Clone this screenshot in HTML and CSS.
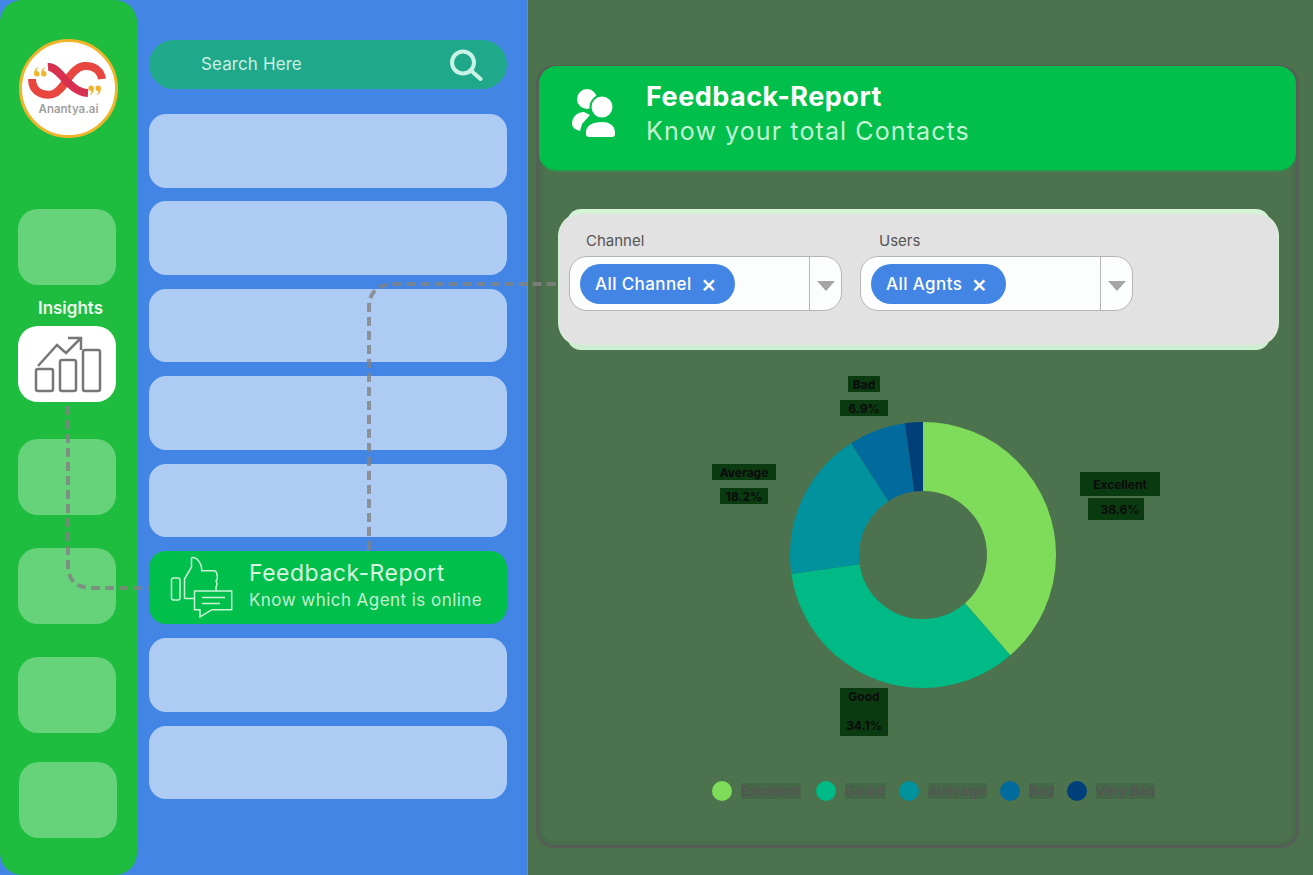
FILE: index.html
```html
<!DOCTYPE html>
<html lang="en">
<head>
    <meta charset="UTF-8">
    <meta name="viewport" content="width=device-width, initial-scale=1.0">
    <title>Feedback Report</title>
    <link rel="stylesheet" href="styles.css">
</head>
<body>
    <div class="app">
        <nav class="rail">
            <div class="logo">
                <svg viewBox="0 0 93 93" width="93" height="93">
                    <path class="logo-loop-a" d="M10 37 C10 52 24 54 31 52 C42 49 48 26 62 24 C72 23 79 29 80 37"/>
                    <path class="logo-loop-b" d="M26 25 C38 24 46 50 66 51"/>
                    <g class="logo-quote">
                        <path d="M12 32 Q12 26 17 25 Q14 27 14.5 29 A2.8 2.8 0 1 1 12 32Z"/>
                        <path d="M19 32 Q19 26 24 25 Q21 27 21.5 29 A2.8 2.8 0 1 1 19 32Z"/>
                        <path d="M79 46 Q79 52 74 53 Q77 51 76.5 49 A2.8 2.8 0 1 1 79 46Z"/>
                        <path d="M72 46 Q72 52 67 53 Q70 51 69.5 49 A2.8 2.8 0 1 1 72 46Z"/>
                    </g>
                    <text class="logo-name" x="46.5" y="71">Anantya.ai</text>
                </svg>
            </div>
            <div class="tile tile-first"></div>
            <div class="tile-label">Insights</div>
            <div class="tile tile-active">
                <svg viewBox="0 0 98 76" width="98" height="76">
                    <rect x="18" y="43" width="17" height="22" rx="2"/>
                    <rect x="42" y="34" width="16" height="31" rx="2"/>
                    <rect x="65" y="24" width="17" height="41" rx="2"/>
                    <path d="M20 40 L39 19 L48 27 L63 12 M50 12 H63 V24"/>
                </svg>
            </div>
            <div class="tile tile-gap"></div>
            <div class="tile tile-gap-s"></div>
            <div class="tile tile-gap-s"></div>
            <div class="tile tile-last"></div>
        </nav>

        <section class="list">
            <div class="search">
                <span>Search Here</span>
                <svg viewBox="0 0 34 34" width="34" height="34">
                    <circle cx="14" cy="15.5" r="11"/>
                    <path d="M22.5 24 L31.5 32"/>
                </svg>
            </div>
            <div class="row"></div>
            <div class="row"></div>
            <div class="row"></div>
            <div class="row"></div>
            <div class="row"></div>
            <div class="row row-active">
                <svg viewBox="0 0 64 64" width="64" height="64">
                    <rect x="1.5" y="22" width="8.5" height="22" rx="2"/>
                    <path d="M14.5 42.5 V23 L21.5 11 V2 Q23 0.5 27 3 Q32 8 31.7 14.7 H44 Q47 15 47 19 Q48 23 46 25 Q48 28 46 31 V35"/>
                    <path d="M14.5 42.5 H24.5"/>
                    <path d="M24.5 35 H61.7 V53.7 H42 L30 61 V53.7 H24.5 Z"/>
                    <path d="M32 41.5 H55 M32 47.5 H50"/>
                </svg>
                <div>
                    <div class="row-title">Feedback-Report</div>
                    <div class="row-sub">Know which Agent is online</div>
                </div>
            </div>
            <div class="row"></div>
            <div class="row"></div>
        </section>

        <main class="report">
            <div class="panel">
                <header class="panel-head">
                    <svg viewBox="0 0 48 54" width="48" height="54">
                        <circle cx="17" cy="12" r="10"/>
                        <path d="M2 37 C2 29 8 25 14 25 L20 28 L12 37 L10 44 Q2 42 2 37Z"/>
                        <circle class="front" cx="32" cy="20" r="11.5"/>
                        <path class="front" d="M15 45 C15 38 22 34 32 34 C42 34 46 40 46 45 V47 Q46 51 42 51 H19 Q15 51 15 47Z"/>
                    </svg>
                    <div>
                        <h1>Feedback-Report</h1>
                        <p>Know your total Contacts</p>
                    </div>
                </header>

                <div class="filters">
                    <div class="field">
                        <label>Channel</label>
                        <div class="select">
                            <div class="select-value"><span class="pill">All Channel <b>×</b></span></div>
                            <div class="select-arrow"></div>
                        </div>
                    </div>
                    <div class="field field-users">
                        <label>Users</label>
                        <div class="select">
                            <div class="select-value"><span class="pill">All Agnts <b>×</b></span></div>
                            <div class="select-arrow"></div>
                        </div>
                    </div>
                </div>

                <svg class="chart" viewBox="539 365 757 400" width="757" height="400">
                    <g transform="rotate(-90 923 555)" fill="none" stroke-width="69">
                        <circle cx="923" cy="555" r="98.5" pathLength="100" stroke="#7fdb5a" stroke-dasharray="38.6 100"/>
                        <circle cx="923" cy="555" r="98.5" pathLength="100" stroke="#00ba85" stroke-dasharray="34.1 100" stroke-dashoffset="-38.6"/>
                        <circle cx="923" cy="555" r="98.5" pathLength="100" stroke="#00929d" stroke-dasharray="18.2 100" stroke-dashoffset="-72.7"/>
                        <circle cx="923" cy="555" r="98.5" pathLength="100" stroke="#006b9c" stroke-dasharray="6.9 100" stroke-dashoffset="-90.9"/>
                        <circle cx="923" cy="555" r="98.5" pathLength="100" stroke="#003f7a" stroke-dasharray="2.2 100" stroke-dashoffset="-97.8"/>
                    </g>
                    <rect class="blk" x="848" y="376" width="32" height="16"/>
                    <rect class="blk" x="840" y="400" width="48" height="16"/>
                    <text class="pct" x="864" y="389">Bad</text>
                    <text class="pct" x="864" y="413">6.9%</text>
                    <rect class="blk" x="712" y="464" width="64" height="16"/>
                    <rect class="blk" x="720" y="488" width="48" height="16"/>
                    <text class="pct" x="744" y="477">Average</text>
                    <text class="pct" x="744" y="501">18.2%</text>
                    <rect class="blk" x="1080" y="472" width="80" height="24"/>
                    <rect class="blk" x="1088" y="498" width="56" height="22"/>
                    <text class="pct" x="1120" y="489">Excellent</text>
                    <text class="pct" x="1120" y="514">38.6%</text>
                    <rect class="blk" x="840" y="688" width="48" height="48"/>
                    <text class="pct" x="864" y="701">Good</text>
                    <text class="pct" x="864" y="730">34.1%</text>
                </svg>

                <ul class="legend">
                    <li><i class="dot-1"></i><span>Excellent</span></li>
                    <li><i class="dot-2"></i><span class="wide-good">Good</span></li>
                    <li><i class="dot-3"></i><span class="wide-avg">Average</span></li>
                    <li><i class="dot-4"></i><span>Bad</span></li>
                    <li><i class="dot-5"></i><span>Very Bad</span></li>
                </ul>
            </div>
        </main>

        <!-- dashed lines running between the three columns -->
        <svg class="links" viewBox="0 0 1313 875" width="1313" height="875">
            <path d="M68 406 V565 Q68 588 92 588 H149"/>
            <path d="M369 550 V308 Q369 284 395 284 H558"/>
        </svg>
    </div>
</body>
</html>
```

FILE: styles.css
```css
* {
    box-sizing: border-box;
}
body {
    margin: 0;
    padding: 0;
    font-family: "Inter", "Liberation Sans", sans-serif;
}
.app {
    position: relative;
    display: flex;
    width: 1313px;
    height: 875px;
    overflow: hidden;
    background-color: #4c724e;
}

/* left rail */
.rail {
    width: 137px;
    height: 875px;
    padding: 39px 0 0 18px;
    background-color: #1fbd3f;
    border-radius: 22px;
    position: relative;
    z-index: 1;
}
.list {
    margin-left: -137px;
    width: 528px;
    height: 875px;
    padding: 40px 20px 0 149px;
    background-color: #4285e4;
    border-right: 1px solid #6b9a70;
}
.logo {
    width: 99px;
    height: 99px;
    margin-left: 1px;
    border: 3px solid #f0b429;
    border-radius: 50%;
    background-color: #fff;
}
.logo svg {
    display: block;
}
.logo-loop-a,
.logo-loop-b {
    fill: none;
    stroke-width: 8;
}
.logo-loop-a {
    stroke: #e8463f;
}
.logo-loop-b {
    stroke: #d8304f;
}
.logo-quote {
    fill: #f0b429;
}
.logo-name {
    fill: #a0a0a0;
    font-size: 11.5px;
    font-weight: 600;
    text-anchor: middle;
}
.tile {
    width: 98px;
    height: 76px;
    border-radius: 20px;
    background-color: #66d37a;
}
.tile-first {
    margin-top: 71px;
}
.tile-label {
    margin-top: 13px;
    height: 20px;
    width: 105px;
    color: #eafbee;
    font-size: 17px;
    font-weight: 600;
    line-height: 20px;
    text-align: center;
}
.tile-active {
    margin-top: 8px;
    background-color: #fff;
}
.tile-active svg {
    display: block;
    fill: none;
    stroke: #777;
    stroke-width: 2.5;
}
.tile-gap {
    margin-top: 37px;
}
.tile-gap-s {
    margin-top: 33px;
}
.tile-last {
    margin: 29px 0 0 1px;
}

/* middle list */
.search {
    display: flex;
    align-items: center;
    justify-content: space-between;
    height: 49px;
    padding: 0 24px 2px 52px;
    margin-bottom: 25px;
    border-radius: 25px;
    background-color: #1fa88a;
    color: #c9efe3;
    font-size: 17px;
    letter-spacing: 0.1px;
}
.search svg {
    fill: none;
    stroke: #c9f3e6;
    stroke-width: 4;
    stroke-linecap: round;
}
.row {
    height: 73.5px;
    margin-bottom: 13.9px;
    border-radius: 17px;
    background-color: #aecbf3;
}
.row-active {
    display: flex;
    align-items: center;
    gap: 15px;
    padding: 0 0 0 21px;
    background-color: #00bf4b;
}
.row-active svg {
    fill: none;
    stroke: #c9f5d5;
    stroke-width: 1.5;
}
.row-active div div {
    position: relative;
    top: -2px;
}
.row-title {
    color: #d8f8e0;
    font-size: 23px;
    letter-spacing: 0.5px;
    line-height: 30px;
}
.row-sub {
    color: #c4f0d0;
    font-size: 17px;
    letter-spacing: 0.45px;
    line-height: 25px;
}

/* report panel */
.report {
    flex: 1;
    padding: 65px 14px 0 8px;
}
.panel {
    height: 783px;
    border: 3px solid #565f56;
    border-radius: 18px;
    box-shadow: inset 0 0 0 4px #486d4a;
}
.panel-head {
    display: flex;
    align-items: center;
    gap: 28px;
    height: 106px;
    margin-top: -2px;
    padding: 0 0 8px 31px;
    border-radius: 18px;
    background-color: #00bf4b;
    border-bottom: 2px solid #2f8f4e;
}
.panel-head svg {
    fill: #fff;
}
.panel-head .front {
    stroke: #00bf4b;
    stroke-width: 2;
}
.panel-head h1 {
    margin: 0;
    color: #fff;
    font-size: 27px;
    font-weight: 700;
    letter-spacing: 0.5px;
    line-height: 34px;
}
.panel-head p {
    margin: 0;
    color: #c4f5d2;
    font-size: 25px;
    letter-spacing: 1.1px;
    line-height: 34px;
}
.filters {
    display: flex;
    gap: 18px;
    width: 719px;
    height: 131px;
    margin: 42px 0 0 20px;
    padding: 17px 0 0 10px;
    border-radius: 22px;
    background-color: #e2e2e2;
    box-shadow: 0 -13px 0 -8px #d5f3d7, 0 13px 0 -8px #cdeed0, 0 0 0 1px #d5f3d7;
}
.field label {
    display: block;
    height: 20px;
    margin-bottom: 5px;
    padding-left: 17px;
    color: #555;
    font-size: 15px;
    line-height: 20px;
}
.field-users label {
    padding-left: 19px;
}
.select {
    display: flex;
    width: 273px;
    height: 55px;
    border: 1px solid #b5b5b5;
    border-radius: 18px;
    background-color: #fcfefd;
}
.select-value {
    flex: 1;
    display: flex;
    align-items: center;
    padding-left: 10px;
}
.pill {
    display: flex;
    align-items: center;
    gap: 9px;
    height: 40px;
    padding: 0 18px 0 15px;
    border-radius: 20px;
    background-color: #4285e4;
    color: #fff;
    font-size: 17px;
    font-weight: 500;
    letter-spacing: 0.4px;
}
.pill b {
    font-size: 24px;
    font-weight: 500;
}
.select-arrow {
    width: 32px;
    border-left: 1px solid #b5b5b5;
    position: relative;
}
.select-arrow::after {
    content: "";
    position: absolute;
    left: 7px;
    top: 24px;
    border-left: 9px solid transparent;
    border-right: 9px solid transparent;
    border-top: 10px solid #a5a5a5;
}

/* chart */
.chart {
    display: block;
    margin-top: 20px;
}
.blk {
    fill: #0a3a10;
}
.pct {
    fill: #0b0b0b;
    font-size: 12px;
    font-weight: 700;
    text-anchor: middle;
}
.legend {
    display: flex;
    gap: 13px;
    margin: 16px 0 0;
    padding: 0 0 0 173px;
    list-style: none;
    color: #555;
    font-size: 13.5px;
    font-weight: 600;
}
.legend li {
    display: flex;
    align-items: center;
    gap: 9px;
}
.legend span {
    background-color: #456848;
}
.legend li:first-child {
    margin-right: 2px;
}
.wide-good {
    letter-spacing: 1.6px;
}
.wide-avg {
    letter-spacing: 0.7px;
}
.legend i {
    width: 20px;
    height: 20px;
    border-radius: 50%;
}
.dot-1 {
    background-color: #7fdb5a;
}
.dot-2 {
    background-color: #00ba85;
}
.dot-3 {
    background-color: #00929d;
}
.dot-4 {
    background-color: #006b9c;
}
.dot-5 {
    background-color: #003f7a;
}

/* connector overlay */
.links {
    position: absolute;
    left: 0;
    top: 0;
    z-index: 2;
    pointer-events: none;
    fill: none;
    stroke: rgba(130, 130, 130, 0.8);
    stroke-width: 4;
    stroke-dasharray: 9 5;
}
```
